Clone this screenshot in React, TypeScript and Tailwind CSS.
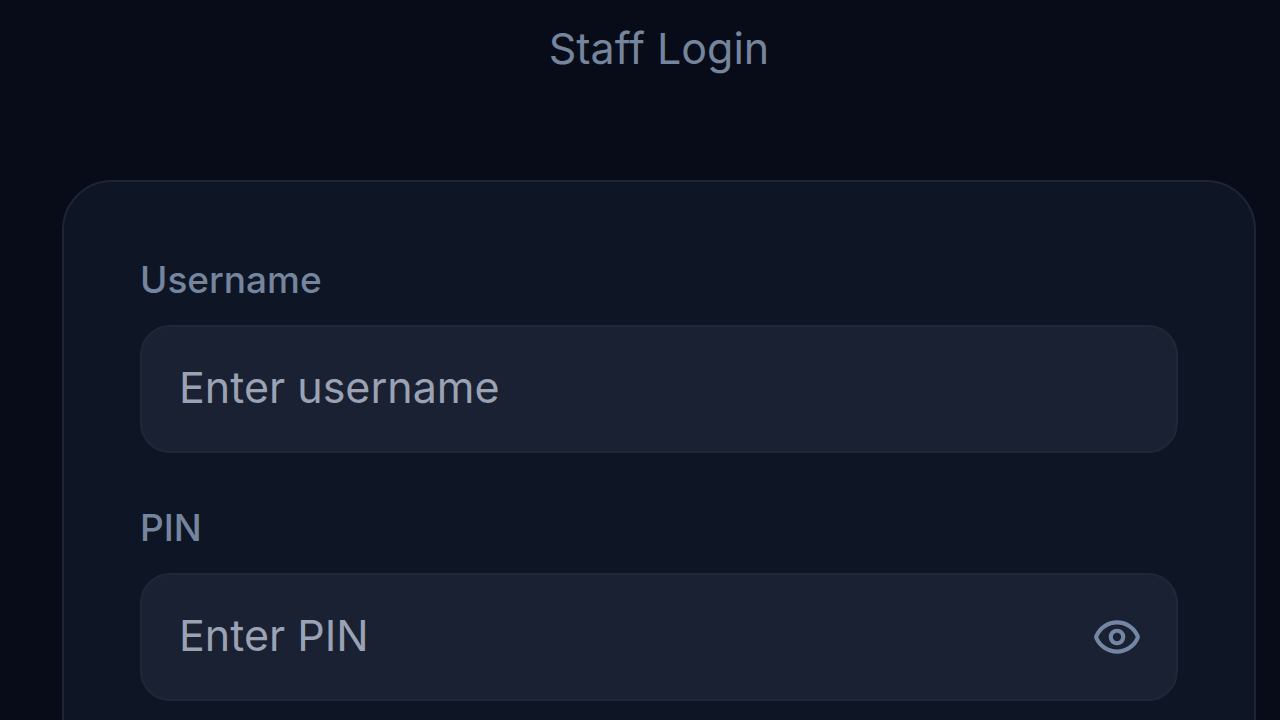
import { useState } from "react";
import { Eye, EyeOff } from "lucide-react";

export default function App() {
  const [username, setUsername] = useState("");
  const [pin, setPin] = useState("");
  const [showPin, setShowPin] = useState(false);

  const labelClass =
    "block mb-[25px] text-[37px] leading-10 font-medium text-[#75859d]";
  const inputClass =
    "block w-full h-32 px-[37px] pb-1 rounded-[30px] border-2 border-[#1f2838] bg-[#1a2132] text-[43px] text-slate-100 placeholder:text-[#9aa2b4] outline-none";

  return (
    <main className="h-screen overflow-hidden bg-[#080c18] pt-4 pl-[62px] pr-6 font-['Inter',sans-serif]">
      <h1 className="mb-[100px] text-center text-[43px] leading-[64px] text-[#75859d]">
        Staff Login
      </h1>

      <form
        className="rounded-[50px] border-2 border-[#1e2635] bg-[#0e1524] px-[76px] pt-[78px] pb-[76px]"
        onSubmit={(e) => e.preventDefault()}
      >
        <div className="mb-[55px]">
          <label htmlFor="username" className={labelClass}>
            Username
          </label>
          <input
            id="username"
            type="text"
            placeholder="Enter username"
            value={username}
            onChange={(e) => setUsername(e.target.value)}
            className={inputClass}
          />
        </div>

        <div>
          <label htmlFor="pin" className={labelClass}>
            PIN
          </label>
          <div className="relative">
            <input
              id="pin"
              type={showPin ? "text" : "password"}
              placeholder="Enter PIN"
              value={pin}
              onChange={(e) => setPin(e.target.value)}
              className={inputClass}
            />
            {/* toggle pin visibility */}
            <button
              type="button"
              aria-label={showPin ? "Hide PIN" : "Show PIN"}
              onClick={() => setShowPin(!showPin)}
              className="absolute inset-y-0 right-9 flex items-center text-[#7486a3]"
            >
              {showPin ? <EyeOff size={50} /> : <Eye size={50} />}
            </button>
          </div>
        </div>
      </form>
    </main>
  );
}
